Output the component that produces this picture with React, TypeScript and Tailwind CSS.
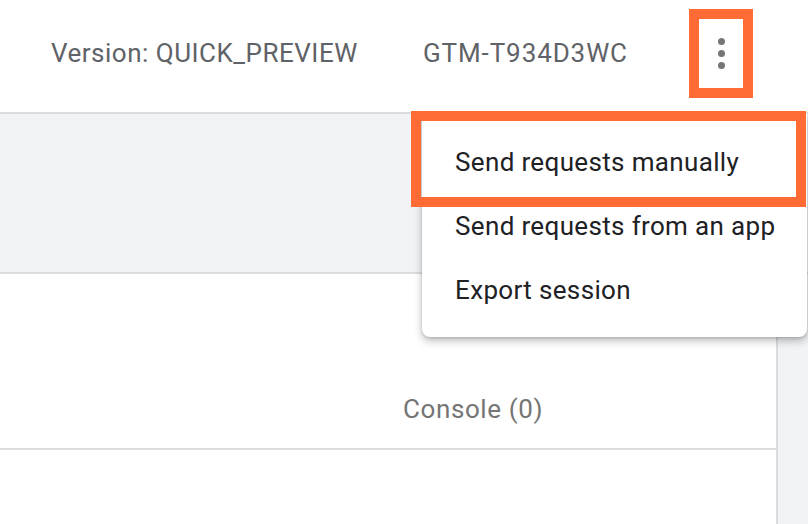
import React from "react";

const menuItems = ["Send requests manually", "Send requests from an app", "Export session"];

const App: React.FC = () => {
  return (
    <div
      className="relative w-[808px] h-[524px] overflow-hidden bg-white"
      style={{ fontFamily: "Roboto, 'Liberation Sans', sans-serif" }}
    >
      {/* header */}
      <div className="flex h-[114px] items-center border-b-2 border-[#dadce0] pb-[6px] pl-[51px] text-[26px] text-[#5f6368] tracking-[0.5px]">
        <span className="w-[306px] whitespace-nowrap">Version: QUICK_PREVIEW</span>
        <span className="ml-[66px] w-[203px] whitespace-nowrap tracking-[0.9px]">GTM-T934D3WC</span>
        <div className="ml-[63px] flex h-[89px] w-[64px] items-center justify-center border-[10px] border-[#ff6b35]">
          <div className="flex flex-col items-center gap-[5px]">
            <span className="h-[7px] w-[7px] rounded-full bg-[#757575]" />
            <span className="h-[7px] w-[7px] rounded-full bg-[#757575]" />
            <span className="h-[7px] w-[7px] rounded-full bg-[#757575]" />
          </div>
        </div>
      </div>

      {/* toolbar band */}
      <div className="h-[160px] border-b-2 border-[#dadce0] bg-[#f1f3f4]" />

      {/* content */}
      <div className="flex h-full">
        <div className="flex-1 border-r-2 border-[#dadce0]">
          <div className="flex h-[176px] items-end border-b-2 border-[#dadce0] pb-[19px] pl-[403px]">
            <span className="text-[26px] text-[#757575] tracking-[0.6px]">Console (0)</span>
          </div>
        </div>
        <div className="w-[30px] bg-[#f1f3f4]" />
      </div>

      {/* overflow menu */}
      <div className="absolute left-[422px] top-[113px] w-[385px] rounded-b-[8px] bg-white py-[16px] shadow-[0_4px_8px_rgba(0,0,0,0.25),0_1px_3px_rgba(0,0,0,0.15)]">
        {menuItems.map((item) => (
          <div
            key={item}
            className="flex h-[64px] items-center whitespace-nowrap pl-[33px] pt-[2px] text-[26px] text-[#202124] tracking-[0.35px]"
          >
            {item}
          </div>
        ))}
      </div>

      {/* highlight around first item */}
      <div className="absolute left-[411px] top-[111px] h-[96px] w-[395px] border-[10px] border-[#ff6b35]" />
    </div>
  );
};

export default App;
